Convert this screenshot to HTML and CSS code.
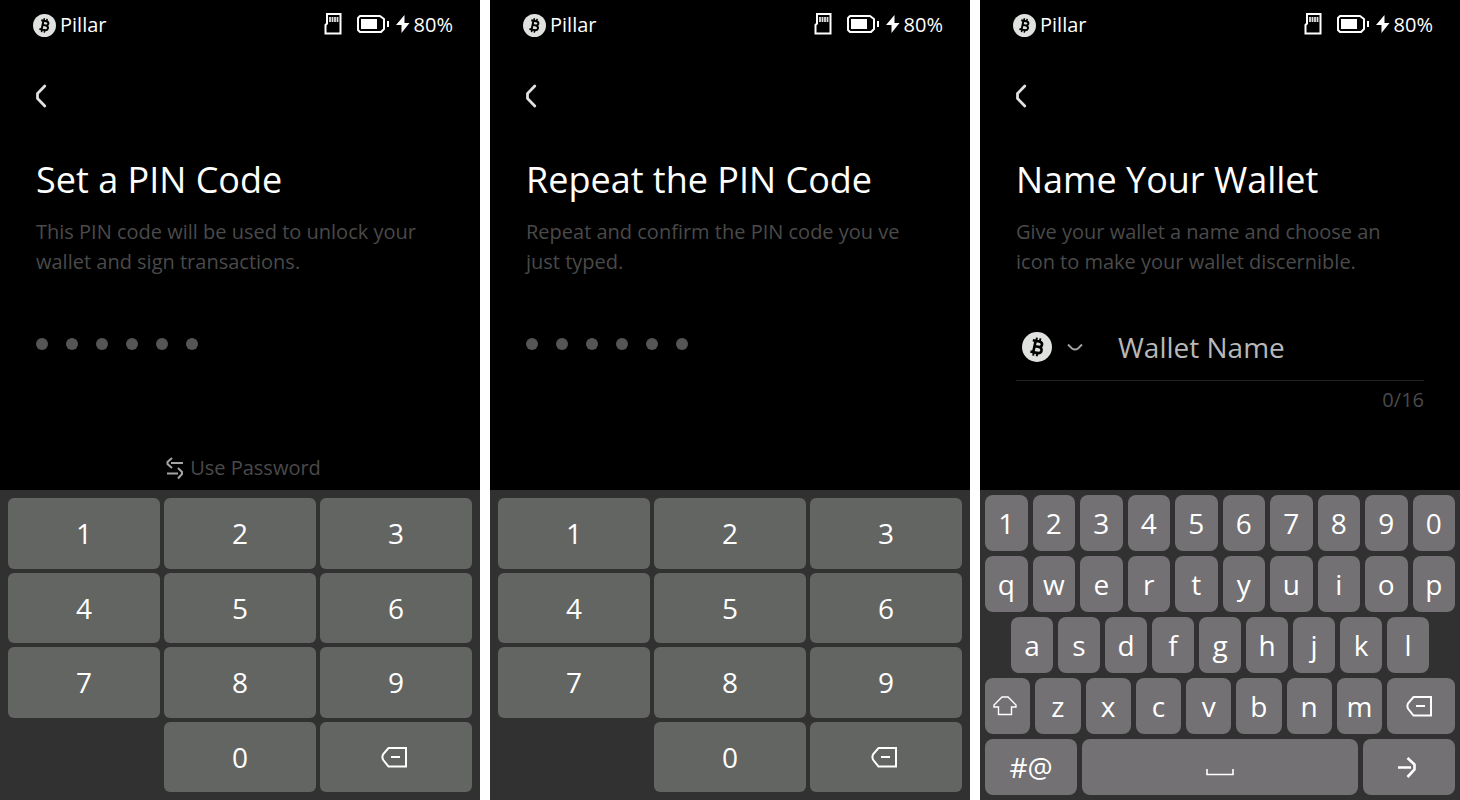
FILE: index.html
```html
<!DOCTYPE html>
<html lang="en">
<head>
<meta charset="utf-8">
<meta name="viewport" content="width=device-width, initial-scale=1">
<title>Pillar – wallet setup</title>
<link rel="stylesheet" href="styles.css">
</head>
<body>
<svg class="sprite" aria-hidden="true">
  <symbol id="coin" viewBox="0 0 30 30">
    <circle cx="15" cy="15" r="15" fill="#dfe2de"/>
    <g transform="rotate(12 15 15)" fill="none" stroke="#000" stroke-width="2.6">
      <path d="M9.5 9.2H16C20.6 9.2 20.6 14.6 16 14.6H12.4M16 14.6C21.6 14.6 21.6 20.8 16 20.8H9.5M12.4 9.2V20.8"/>
      <path d="M13 5.8V9.2M16.6 5.8V9.2M13 20.8V24.2M16.6 20.8V24.2" stroke-width="2"/>
    </g>
  </symbol>
  <symbol id="back" viewBox="0 0 12 24">
    <path d="M8.800 2L1.500 9.5V14.5L8.800 22" fill="none" stroke="#dfe2de" stroke-width="2.8" stroke-linecap="round"/>
  </symbol>
  <symbol id="card" viewBox="0 0 18 22">
    <path d="M3 1H16.5V20.5H1.5V12L3 10.5Z" fill="none" stroke="#fff" stroke-width="2"/>
    <path d="M6 4V9M8.5 4V9M11 4V9M13.5 4V9" stroke="#ddd" stroke-width="1.8"/>
  </symbol>
  <symbol id="battery" viewBox="0 0 32 18">
    <path d="M3 1H23L27 4V14L24 17H3L1 15V3Z" fill="none" stroke="#fff" stroke-width="2" stroke-linejoin="round"/>
    <path d="M4 4H20V14H4ZM30 6H32V12H30Z" fill="#fff"/>
  </symbol>
  <symbol id="bolt" viewBox="0 0 14 18">
    <path d="M8.500 0L0 10H5.5V18L13.500 8H8.500Z" fill="#fff"/>
  </symbol>
  <symbol id="swap" viewBox="0 0 18 24">
    <path d="M6 2L1.500 6V8L6 12M5 7H17M12 12L16 16V18L12 22.5M1 17.5H12" fill="none" stroke="#a3a5a2" stroke-width="2"/>
  </symbol>
  <symbol id="erase" viewBox="0 0 26 22">
    <path d="M7.500 2H25V20.500H7.500L2.300 14Q0.500 11 2.300 8Z" fill="none" stroke="#fff" stroke-width="2"/>
    <path d="M10 11H19" stroke="#fff" stroke-width="2"/>
  </symbol>
  <symbol id="shift" viewBox="0 0 24 20">
    <path d="M9 1H15L23 9V11H18.5V18.5H5.500V11H1V9Z" fill="none" stroke="#fff" stroke-width="1.4"/>
  </symbol>
  <symbol id="space" viewBox="0 0 28 8">
    <path d="M1 1V6.500H27V1" fill="none" stroke="#fff" stroke-width="1.6"/>
  </symbol>
  <symbol id="enter" viewBox="0 0 20 22">
    <path d="M1 11.500H14M10.500 2L17.500 8.500V13.500L10.500 21" fill="none" stroke="#fff" stroke-width="2.6"/>
  </symbol>
  <symbol id="down" viewBox="0 0 16 8">
    <path d="M1 1.500L5 5.500Q8 7.500 11 5.500L15 1.500" fill="none" stroke="#a3a5a2" stroke-width="1.8"/>
  </symbol>
</svg>

<main class="screens">
  <section class="phone">
    <header class="status">
      <span class="brand"><svg class="brand-icon"><use href="#coin"/></svg>Pillar</span>
      <span class="indicators">
        <svg class="card"><use href="#card"/></svg>
        <svg class="battery"><use href="#battery"/></svg>
        <svg class="bolt"><use href="#bolt"/></svg>
        <span>80%</span>
      </span>
    </header>
    <div class="content">
      <button class="back" aria-label="Back"><svg class="back-icon"><use href="#back"/></svg></button>
      <h1 class="title">Set a PIN Code</h1>
      <p class="lead">This PIN code will be used to unlock your wallet and sign transactions.</p>
      <div class="pin" role="img" aria-label="PIN, 6 digits"><i class="dot"></i><i class="dot"></i><i class="dot"></i><i class="dot"></i><i class="dot"></i><i class="dot"></i></div>
      <button class="switch"><svg class="swap"><use href="#swap"/></svg>Use Password</button>
    </div>
    <div class="keypad">
      <button class="key">1</button><button class="key">2</button><button class="key">3</button>
      <button class="key">4</button><button class="key">5</button><button class="key">6</button>
      <button class="key">7</button><button class="key">8</button><button class="key">9</button>
      <button class="key zero">0</button><button class="key" aria-label="Delete"><svg class="erase"><use href="#erase"/></svg></button>
    </div>
  </section>

  <section class="phone">
    <header class="status">
      <span class="brand"><svg class="brand-icon"><use href="#coin"/></svg>Pillar</span>
      <span class="indicators">
        <svg class="card"><use href="#card"/></svg>
        <svg class="battery"><use href="#battery"/></svg>
        <svg class="bolt"><use href="#bolt"/></svg>
        <span>80%</span>
      </span>
    </header>
    <div class="content">
      <button class="back" aria-label="Back"><svg class="back-icon"><use href="#back"/></svg></button>
      <h1 class="title">Repeat the PIN Code</h1>
      <p class="lead">Repeat and confirm the PIN code you ve just typed.</p>
      <div class="pin" role="img" aria-label="PIN, 6 digits"><i class="dot"></i><i class="dot"></i><i class="dot"></i><i class="dot"></i><i class="dot"></i><i class="dot"></i></div>
    </div>
    <div class="keypad">
      <button class="key">1</button><button class="key">2</button><button class="key">3</button>
      <button class="key">4</button><button class="key">5</button><button class="key">6</button>
      <button class="key">7</button><button class="key">8</button><button class="key">9</button>
      <button class="key zero">0</button><button class="key" aria-label="Delete"><svg class="erase"><use href="#erase"/></svg></button>
    </div>
  </section>

  <section class="phone">
    <header class="status">
      <span class="brand"><svg class="brand-icon"><use href="#coin"/></svg>Pillar</span>
      <span class="indicators">
        <svg class="card"><use href="#card"/></svg>
        <svg class="battery"><use href="#battery"/></svg>
        <svg class="bolt"><use href="#bolt"/></svg>
        <span>80%</span>
      </span>
    </header>
    <div class="content">
      <button class="back" aria-label="Back"><svg class="back-icon"><use href="#back"/></svg></button>
      <h1 class="title">Name Your Wallet</h1>
      <p class="lead">Give your wallet a name and choose an icon to make your wallet discernible.</p>
      <div class="field">
        <button class="picker" aria-label="Choose icon"><svg class="coin"><use href="#coin"/></svg><svg class="down"><use href="#down"/></svg></button>
        <input class="name" type="text" maxlength="16" placeholder="Wallet Name" aria-label="Wallet Name">
      </div>
      <p class="count">0/16</p>
    </div>
    <div class="keyboard">
      <div class="row"><button class="key">1</button><button class="key">2</button><button class="key">3</button><button class="key">4</button><button class="key">5</button><button class="key">6</button><button class="key">7</button><button class="key">8</button><button class="key">9</button><button class="key">0</button></div>
      <div class="row"><button class="key">q</button><button class="key">w</button><button class="key">e</button><button class="key">r</button><button class="key">t</button><button class="key">y</button><button class="key">u</button><button class="key">i</button><button class="key">o</button><button class="key">p</button></div>
      <div class="row inset"><button class="key">a</button><button class="key">s</button><button class="key">d</button><button class="key">f</button><button class="key">g</button><button class="key">h</button><button class="key">j</button><button class="key">k</button><button class="key">l</button></div>
      <div class="row"><button class="key" aria-label="Shift"><svg class="shift"><use href="#shift"/></svg></button><button class="key">z</button><button class="key">x</button><button class="key">c</button><button class="key">v</button><button class="key">b</button><button class="key">n</button><button class="key">m</button><button class="key delete" aria-label="Delete"><svg class="erase"><use href="#erase"/></svg></button></div>
      <div class="row"><button class="key">#@</button><button class="key wide" aria-label="Space"><svg class="space"><use href="#space"/></svg></button><button class="key" aria-label="Enter"><svg class="enter"><use href="#enter"/></svg></button></div>
    </div>
  </section>
</main>
</body>
</html>
```
FILE: styles.css
```css
* { box-sizing: border-box; }
body { margin: 0; background: #fff; color: #fff; font-family: "Open Sans", "Noto Sans", sans-serif; font-size: 20px; line-height: 30px; }
button, input { margin: 0; padding: 0; border: 0; background: none; color: inherit; font: inherit; }
svg { display: block; flex: none; }
.sprite { position: absolute; width: 0; height: 0; }

.screens { display: grid; grid-template-columns: repeat(3, minmax(0, 1fr)); gap: 10px; min-height: 100vh; }
.phone { display: flex; flex-direction: column; background: #000; }

.status { display: flex; justify-content: space-between; align-items: center; height: 50px; padding: 0 27px 0 33px; }
.brand, .indicators { display: flex; align-items: center; }
.brand { gap: 4px; }
.brand-icon { width: 23px; height: 23px; }
.card { width: 18px; height: 22px; margin: 0 15px 2px 0; }
.battery { width: 32px; height: 18px; margin: 0 7px 2px 0; }
.bolt { width: 14px; height: 18px; margin: 0 4px 2px 0; }

.content { flex: 1; display: flex; flex-direction: column; padding: 34px 36px 7px; }
.back { align-self: flex-start; height: 24px; }
.back-icon { width: 12px; height: 24px; }
.title { margin: 48px 0 13px; font-size: 36px; line-height: 48px; font-weight: 400; }
.lead { margin: 0; color: #4a4a4a; }
.pin { display: flex; gap: 18px; margin-top: 61px; }
.dot { width: 12px; height: 12px; border-radius: 50%; background: #555654; }
.switch { display: flex; align-items: center; align-self: center; gap: 6px; margin-top: auto; padding-left: 7px; color: #4a4a4a; }
.swap { width: 18px; height: 24px; }

.field { display: flex; align-items: center; gap: 35px; height: 68px; margin-top: 36px; padding-left: 6px; border-bottom: 1px solid #222; }
.picker { display: flex; align-items: center; gap: 15px; }
.coin { width: 30px; height: 30px; }
.down { width: 16px; height: 8px; }
.name { flex: 1; min-width: 0; height: 40px; font-size: 28px; outline: 0; }
.name::placeholder { color: #b8b8b8; opacity: 1; }
.count { margin: 4px 0 0; text-align: right; color: #4a4a4a; }

.key { display: flex; align-items: center; justify-content: center; font-size: 28px; line-height: 40px; }
.keypad { display: grid; grid-template-columns: repeat(3, 1fr); grid-auto-rows: 1fr; gap: 4px; min-height: 310px; padding: 8px; background: #313131; }
.keypad .key { border-radius: 6px; background: #636562; }
.zero { grid-column: 2; }
.erase { width: 26px; height: 22px; margin-right: 4px; }

.keyboard { display: flex; flex-direction: column; gap: 5px; padding: 5px; background: #313131; }
.row { display: flex; gap: 5px; }
.inset { padding: 0 26px; }
.row .key { flex: 1 1 0; min-width: 0; height: 56px; border-radius: 8px; background: #737173; }
.row .wide { flex-grow: 3; }
.row .delete { flex-grow: 0; flex-basis: 68px; }
.shift { width: 24px; height: 20px; margin-right: 6px; }
.space { width: 28px; height: 8px; margin-top: 10px; }
.enter { width: 20px; height: 22px; margin-right: 4px; }
```
